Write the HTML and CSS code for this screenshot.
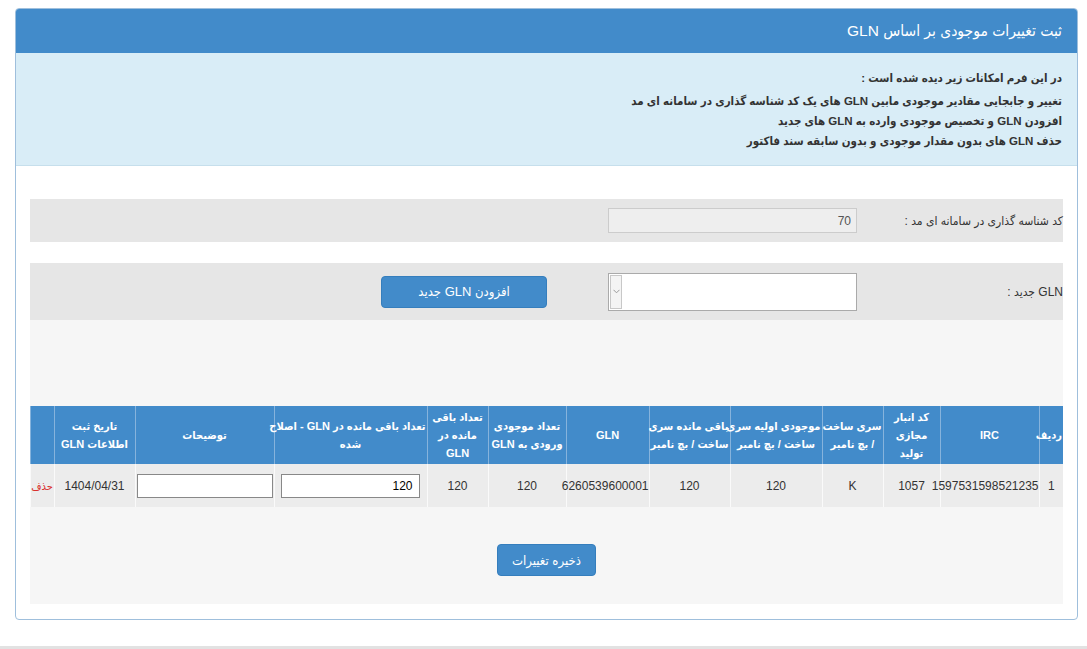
FILE: index.html
```html
<!DOCTYPE html>
<html lang="fa" dir="rtl">
<head>
    <meta charset="UTF-8">
    <meta name="viewport" content="width=device-width, initial-scale=1.0">
    <title>ثبت تغییرات موجودی بر اساس GLN</title>
    <link rel="stylesheet" href="styles.css">
</head>
<body>
    <div class="panel">
        <div class="panel-heading">ثبت تغییرات موجودی بر اساس GLN</div>

        <!-- توضیحات فرم -->
        <div class="info-box">
            <div class="info-title">در این فرم امکانات زیر دیده شده است :</div>
            <div>تغییر و جابجایی مقادیر موجودی مابین GLN های یک کد شناسه گذاری در سامانه ای مد</div>
            <div>افزودن GLN و تخصیص موجودی وارده به GLN های جدید</div>
            <div>حذف GLN های بدون مقدار موجودی و بدون سابقه سند فاکتور</div>
        </div>

        <div class="panel-body">
            <div class="form-row row-code">
                <label class="form-label">کد شناسه گذاری در سامانه ای مد :</label>
                <input type="text" class="form-input" value="70" disabled>
            </div>

            <div class="form-row row-gln">
                <label class="form-label">GLN جدید :</label>
                <div class="select-box" id="glnSelect">
                    <span class="select-value"></span>
                    <span class="select-arrow">
                        <svg width="7" height="5" viewBox="0 0 7 5"><path d="M0.5 0.8 L3.5 3.8 L6.5 0.8" fill="none" stroke="#9a9a9a" stroke-width="1"/></svg>
                    </span>
                </div>
                <button class="btn add-button" id="addButton">افزودن GLN جدید</button>
            </div>

            <div class="grid-section">
                <table class="gln-table">
                    <colgroup>
                        <col style="width:24px">
                        <col style="width:99px">
                        <col style="width:57px">
                        <col style="width:61px">
                        <col style="width:92px">
                        <col style="width:81px">
                        <col style="width:83px">
                        <col style="width:78px">
                        <col style="width:61px">
                        <col style="width:153px">
                        <col style="width:139px">
                        <col style="width:81px">
                        <col style="width:24px">
                    </colgroup>
                    <thead>
                        <tr>
                            <th>ردیف</th>
                            <th>IRC</th>
                            <th>کد انبار<br>مجازی<br>تولید</th>
                            <th>سری ساخت<br>/ بچ نامبر</th>
                            <th>موجودی اولیه سری<br>ساخت / بچ نامبر</th>
                            <th>باقی مانده سری<br>ساخت / بچ نامبر</th>
                            <th>GLN</th>
                            <th>تعداد موجودی<br>ورودی به GLN</th>
                            <th>تعداد باقی<br>مانده در<br>GLN</th>
                            <th>تعداد باقی مانده در GLN - اصلاح<br>شده</th>
                            <th>توضیحات</th>
                            <th>تاریخ ثبت<br>اطلاعات GLN</th>
                            <th></th>
                        </tr>
                    </thead>
                    <tbody>
                        <tr>
                            <td>1</td>
                            <td class="num">1597531598521235</td>
                            <td>1057</td>
                            <td>K</td>
                            <td>120</td>
                            <td>120</td>
                            <td class="num">6260539600001</td>
                            <td>120</td>
                            <td>120</td>
                            <td class="edit-cell"><input type="text" class="cell-input" value="120"></td>
                            <td class="note-cell"><input type="text" class="cell-input"></td>
                            <td class="num">1404/04/31</td>
                            <td class="delete-cell"><a href="#">حذف</a></td>
                        </tr>
                    </tbody>
                </table>

                <div class="save-row">
                    <button class="btn save-button">ذخیره تغییرات</button>
                </div>
            </div>
        </div>
    </div>

    <div class="footer-bar"></div>
</body>
</html>
```

FILE: styles.css
```css
body {
    margin: 0;
    padding: 8px 9px 0 15px;
    background-color: #fff;
    color: #333;
    font-family: 'Liberation Sans', 'DejaVu Sans Condensed', sans-serif;
    font-size: 12px;
    overflow: hidden;
}

.panel {
    border: 1px solid #9fbfdc;
    border-radius: 4px;
    background-color: #fff;
}

.panel-heading {
    height: 44px;
    line-height: 44px;
    padding: 0 15px;
    background-color: #428bca;
    color: #fff;
    font-size: 15.5px;
    border-radius: 3px 3px 0 0;
}

.info-box {
    height: 113px;
    box-sizing: border-box;
    padding: 15px 15px 0;
    background-color: #d9edf7;
    border-bottom: 1px solid #c6dfec;
    font-size: 11.5px;
    font-weight: bold;
    line-height: 20px;
    color: #333;
}

.info-title {
    margin-bottom: 3px;
}

.panel-body {
    padding: 33px 14px 15px;
}

.form-row {
    display: flex;
    align-items: center;
    background-color: #e6e6e6;
}

.form-label {
    width: 206px;
    font-size: 12px;
    color: #333;
}

.row-code {
    height: 43px;
}

.row-gln {
    height: 57px;
    margin-top: 21px;
}

.form-input {
    width: 249px;
    height: 25px;
    box-sizing: border-box;
    padding: 0 5px;
    border: 1px solid #ccc;
    background-color: #eee;
    color: #555;
    font-family: inherit;
    font-size: 12px;
    text-align: right;
}

/* list box with its small scroll arrow on the left */
.select-box {
    display: flex;
    justify-content: space-between;
    width: 249px;
    height: 38px;
    box-sizing: border-box;
    border: 1px solid #aaa;
    background-color: #fff;
}

.select-arrow {
    display: flex;
    align-items: center;
    justify-content: center;
    width: 10px;
    margin: 1px;
    border: 1px solid #c8c8c8;
    background-color: #f4f4f4;
}

.btn {
    border: 1px solid #357ebd;
    border-radius: 4px;
    background-color: #428bca;
    color: #fff;
    font-family: inherit;
    font-size: 13px;
    cursor: pointer;
}

.btn:hover {
    background-color: #3071a9;
}

.add-button {
    width: 166px;
    height: 32px;
    margin-right: 61px;
}

.grid-section {
    background-color: #f6f6f6;
    padding: 86px 0 28px;
}

.gln-table {
    width: 1033px;
    border-collapse: collapse;
    table-layout: fixed;
}

.gln-table th {
    height: 58px;
    padding: 0 1px;
    background-color: #428bca;
    color: #fff;
    font-size: 11px;
    font-weight: bold;
    line-height: 18px;
    border-left: 1px solid #86b3dc;
    text-align: center;
    white-space: nowrap;
}

.gln-table td {
    height: 43px;
    padding: 0 2px;
    background-color: #ececec;
    border-left: 1px solid #fafafa;
    text-align: center;
    font-size: 12px;
    white-space: nowrap;
}

.gln-table td.num {
    padding: 0;
}

.gln-table td.edit-cell {
    padding: 0 7px 0 6px;
}

.gln-table td.note-cell {
    padding: 0 1px;
}

.cell-input {
    width: 100%;
    height: 24px;
    box-sizing: border-box;
    padding: 0 6px;
    border: 1px solid #888;
    background-color: #fff;
    font-family: inherit;
    font-size: 12px;
    direction: ltr;
    text-align: right;
}

.gln-table td.delete-cell {
    padding: 0;
    overflow: visible;
}

.delete-cell a {
    color: #d9302c;
    text-decoration: none;
    font-size: 11px;
}

.save-row {
    display: flex;
    justify-content: center;
    margin-top: 37px;
}

.save-button {
    width: 99px;
    height: 32px;
}

.footer-bar {
    height: 10px;
    margin: 26px -9px 0 -15px;
    background-color: #e2e2e2;
}
```
